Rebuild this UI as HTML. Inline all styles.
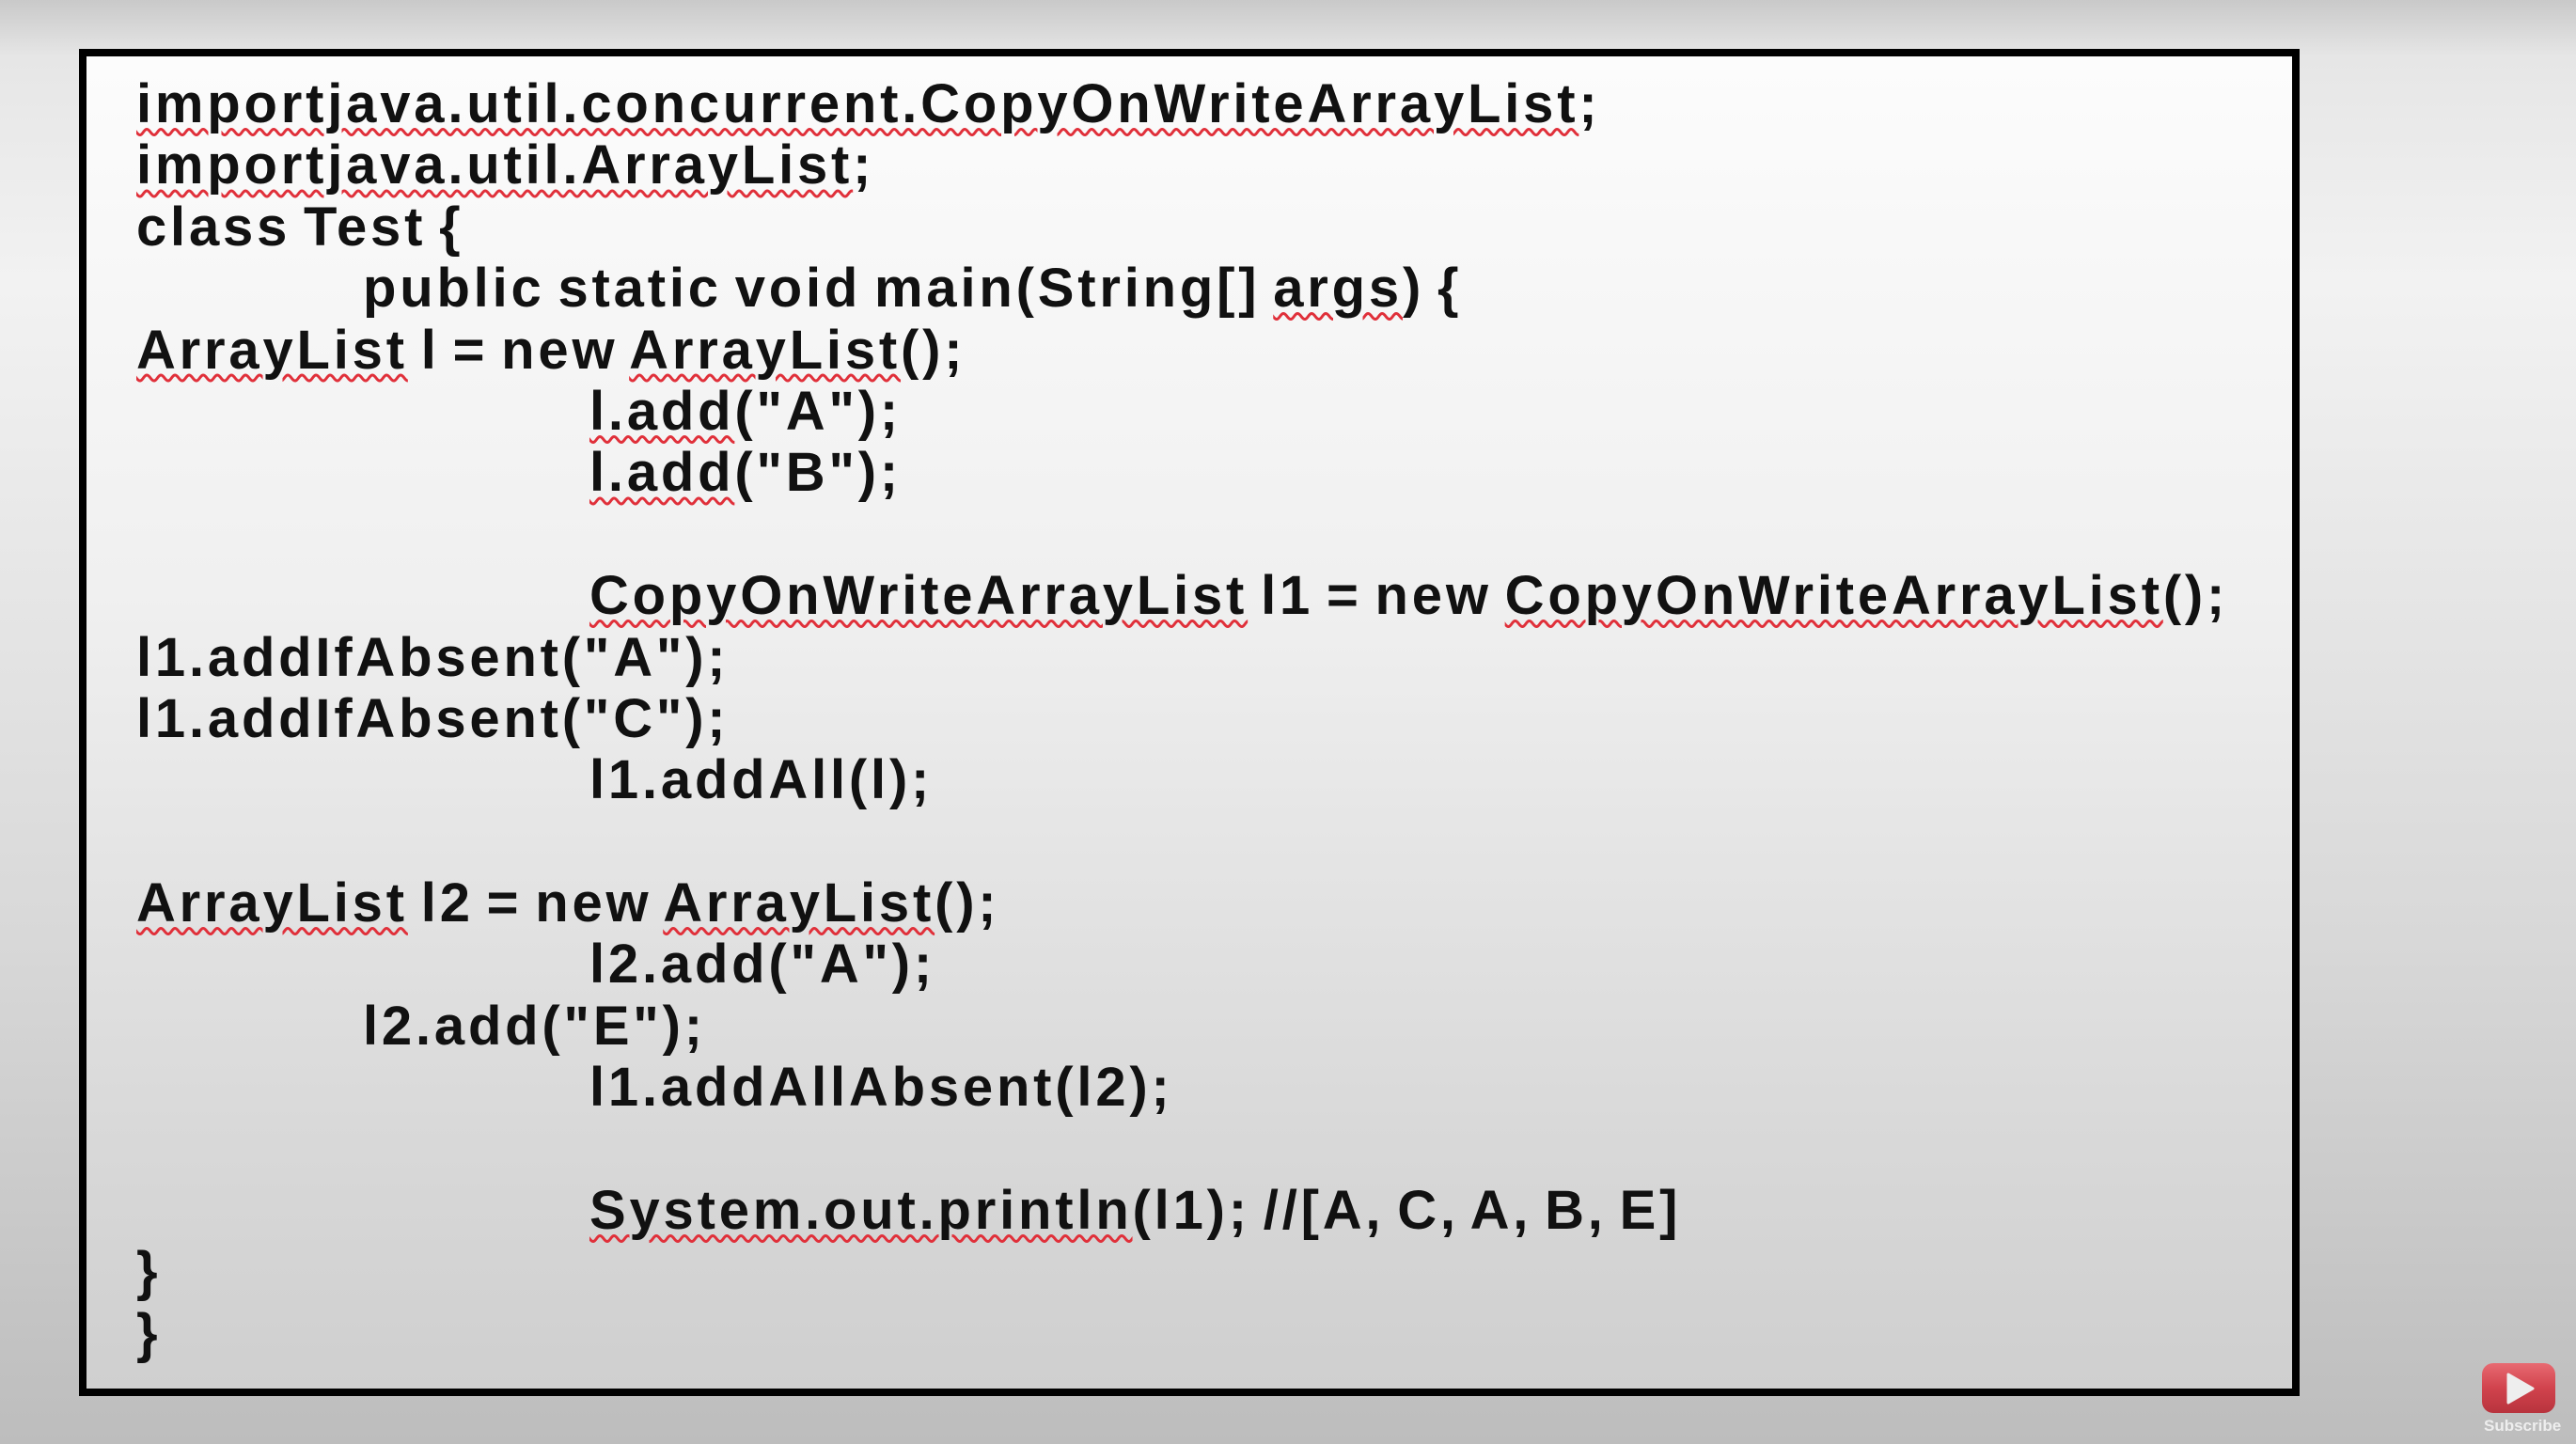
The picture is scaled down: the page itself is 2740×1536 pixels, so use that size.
<!DOCTYPE html>
<html><head><meta charset="utf-8"><style>
html,body{margin:0;padding:0;width:2740px;height:1536px;overflow:hidden}
body{position:relative;
background:linear-gradient(180deg,#c9c9c9 0px,#e6e6e6 60px,#f2f2f2 300px,#d8d8d8 1000px,#bdbdbd 1536px);
font-family:"Liberation Sans",Arial,sans-serif;}
.box{position:absolute;left:84px;top:52px;width:2346px;height:1417px;border:8px solid #000;
background:linear-gradient(180deg,#fcfcfc 0%,#f0f0f0 40%,#d9d9d9 80%,#cfcfcf 100%);}
.code{position:absolute;left:0;top:78px;width:2740px;font-weight:bold;font-size:58px;line-height:65.4px;color:#111;letter-spacing:3.8px;word-spacing:-6px}
.code div{height:65.4px;white-space:pre}
.i1{padding-left:386px}.i2{padding-left:627px}.i0{padding-left:145px}
.s{text-decoration:underline wavy #e0303a;text-decoration-thickness:3px;text-underline-offset:6px}
.yt{position:absolute;left:2640px;top:1450px;width:78px;height:53px;border-radius:12px;
background:linear-gradient(180deg,#e86a72 0%,#d1434d 50%,#b8333d 100%);}
.yt svg{position:absolute;left:24px;top:10px}
.sub{position:absolute;left:2642px;top:1507px;font-size:17px;color:#eee;font-weight:bold}
</style></head><body>
<div class="box"></div>
<div class="code"><div class="i0"><span class="s">importjava.util.concurrent.CopyOnWriteArrayList</span>;</div><div class="i0"><span class="s">importjava.util.ArrayList</span>;</div><div class="i0">class Test {</div><div class="i1">public static void main(String[] <span class="s">args</span>) {</div><div class="i0"><span class="s">ArrayList</span> l = new <span class="s">ArrayList</span>();</div><div class="i2"><span class="s">l.add</span>("A");</div><div class="i2"><span class="s">l.add</span>("B");</div><div></div><div class="i2"><span class="s">CopyOnWriteArrayList</span> l1 = new <span class="s">CopyOnWriteArrayList</span>();</div><div class="i0">l1.addIfAbsent("A");</div><div class="i0">l1.addIfAbsent("C");</div><div class="i2">l1.addAll(l);</div><div></div><div class="i0"><span class="s">ArrayList</span> l2 = new <span class="s">ArrayList</span>();</div><div class="i2">l2.add("A");</div><div class="i1">l2.add("E");</div><div class="i2">l1.addAllAbsent(l2);</div><div></div><div class="i2"><span class="s">System.out.println</span>(l1); //[A, C, A, B, E]</div><div class="i0">}</div><div class="i0">}</div></div>
<div class="yt"><svg width="34" height="34" viewBox="0 0 34 34"><path d="M4 2 L30 17 L4 32 Z" fill="#eee" stroke="#eee" stroke-linejoin="round" stroke-width="3"/></svg></div>
<div class="sub">Subscribe</div>
</body></html>
